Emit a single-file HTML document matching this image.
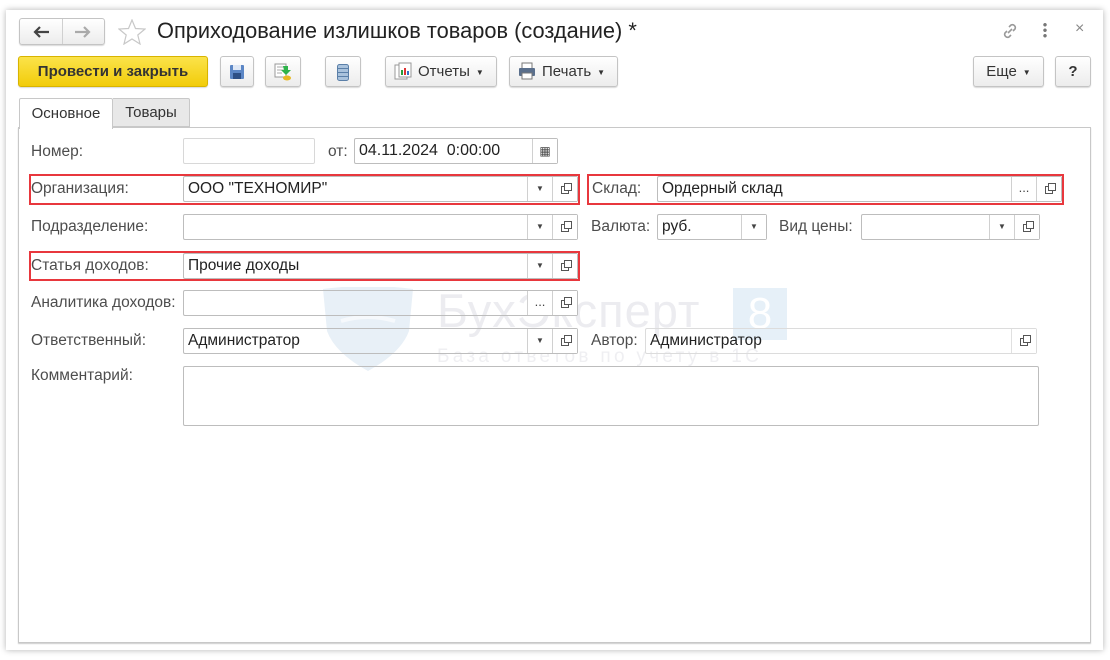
<!DOCTYPE html>
<html><head><meta charset="utf-8"><style>
*{box-sizing:border-box;margin:0;padding:0}
body{width:1110px;height:660px;background:#fff;font-family:"Liberation Sans",Arial,sans-serif;font-size:14px;color:#333;position:relative;overflow:hidden}
.a{position:absolute}
.win{left:6px;top:10px;width:1097px;height:640px;background:#fff;box-shadow:0 0 6px rgba(0,0,0,.3)}
.btn{position:absolute;border:1px solid #c4c4c4;border-radius:3px;background:linear-gradient(#fff,#ececec);box-shadow:0 1px 1px rgba(0,0,0,.15);height:31px;font-size:14px;line-height:29px;color:#333;text-align:center}
.lbl{position:absolute;font-size:15.5px;color:#4d4d4d}
.f{position:absolute;border:1px solid #bdbdbd;border-radius:2px;background:#fff;height:26px;font-size:15.5px;line-height:24px;padding-left:4px;color:#222;white-space:nowrap}
.dd{position:absolute;top:0;bottom:0;width:25px;border-left:1px solid #d0d0d0;font-size:8px;text-align:center;line-height:24px;color:#444;background:#fff}
.op{position:absolute;top:0;bottom:0;right:0;width:25px;border-left:1px solid #d0d0d0;background:#fff}
.op:before{content:"";position:absolute;left:8px;top:9px;width:6px;height:6px;border:1px solid #555}
.op:after{content:"";position:absolute;left:11px;top:6px;width:6px;height:6px;border:1px solid #555;background:#fff}
.red{position:absolute;border:2px solid #e8373d}
.ar{font-size:8px;margin-left:6px;vertical-align:1px}
</style></head><body>
<div class="a win"></div>
<div class="btn" style="left:19px;top:18px;width:86px;height:27px">
<svg class="a" style="left:12px;top:6px" width="18" height="14" viewBox="0 0 18 14"><path d="M17 7H3M8 2L3 7l5 5" fill="none" stroke="#444" stroke-width="2.2"/></svg>
<span style="position:absolute;left:42px;top:0;bottom:0;border-left:1px solid #d0d0d0"></span>
<svg class="a" style="left:54px;top:6px" width="18" height="14" viewBox="0 0 18 14"><path d="M1 7h14M10 2l5 5-5 5" fill="none" stroke="#aaa" stroke-width="2.2"/></svg></div>
<svg class="a" style="left:118px;top:19px" width="28" height="26" viewBox="0 0 28 26"><polygon points="14,1 17.5,9.5 27,10 19.8,16 22,25 14,20 6,25 8.2,16 1,10 10.5,9.5" fill="none" stroke="#c8c8c8" stroke-width="1.2"/></svg>
<div class="a" style="left:157px;top:18px;font-size:21.8px;color:#222">Оприходование излишков товаров (создание) *</div>
<svg class="a" style="left:1000px;top:21px" width="20" height="20" viewBox="0 0 20 20"><g fill="none" stroke="#999" stroke-width="1.6"><path d="M9 6l2-2a3 3 0 014 4l-2 2"/><path d="M11 14l-2 2a3 3 0 01-4-4l2-2"/><path d="M8 12l4-4"/></g></svg>
<div class="a" style="left:1043px;top:22px;width:4px;height:16px;background:radial-gradient(circle,#777 1.5px,transparent 2px) 0 0/4px 5.5px"></div>
<div class="a" style="left:1075px;top:20px;font-size:16px;color:#888">×</div>
<div class="btn" style="left:18px;top:56px;width:190px;background:linear-gradient(#fbe34a,#f2cc0a);border-color:#d8b400;font-weight:bold;color:#333;font-size:15px">Провести и закрыть</div>
<div class="btn" style="left:220px;top:56px;width:34px"><svg style="margin-top:7px" width="16" height="16" viewBox="0 0 16 16"><rect x="1" y="1" width="14" height="14" rx="1" fill="#5b86c5"/><rect x="4" y="1" width="8" height="5" fill="#dfe8f5"/><rect x="4" y="9" width="8" height="6" fill="#2d4f85"/></svg></div>
<div class="btn" style="left:265px;top:56px;width:36px"><svg style="margin-top:6px" width="18" height="18" viewBox="0 0 18 18"><rect x="1" y="1" width="11" height="13" fill="#fff" stroke="#999"/><path d="M3 4h7M3 7h7M3 10h5" stroke="#aaa"/><path d="M9 3h5v4h3l-5 5-5-5h3z" fill="#2fb34a"/><ellipse cx="13" cy="15" rx="4" ry="2.5" fill="#e8b923"/></svg></div>
<div class="btn" style="left:325px;top:56px;width:36px"><svg style="margin-top:7px" width="12" height="17" viewBox="0 0 12 17"><rect x="0.5" y="0.5" width="11" height="16" rx="2" fill="#a9c2dc" stroke="#5a7fa8"/><path d="M1 4.5h10M1 8.5h10M1 12.5h10" stroke="#5a7fa8"/></svg></div>
<div class="btn" style="left:385px;top:56px;width:112px;text-align:left;padding-left:8px;font-size:15px"><svg style="vertical-align:-4px;margin-right:6px" width="18" height="18" viewBox="0 0 18 18"><rect x="1" y="3" width="12" height="14" fill="#fff" stroke="#999"/><rect x="5" y="1" width="12" height="14" fill="#fff" stroke="#999"/><rect x="7" y="8" width="2" height="5" fill="#2a9d3a"/><rect x="10" y="6" width="2" height="7" fill="#d33"/><rect x="13" y="9" width="2" height="4" fill="#3573c8"/></svg>Отчеты<span class="ar">▼</span></div>
<div class="btn" style="left:509px;top:56px;width:109px;text-align:left;padding-left:8px;font-size:15px"><svg style="vertical-align:-4px;margin-right:6px" width="18" height="18" viewBox="0 0 18 18"><rect x="4" y="1" width="10" height="6" fill="#fff" stroke="#777"/><rect x="1" y="6" width="16" height="8" rx="1" fill="#5a6f8c"/><rect x="4" y="11" width="10" height="6" fill="#fff" stroke="#777"/></svg>Печать<span class="ar">▼</span></div>
<div class="btn" style="left:973px;top:56px;width:71px;font-size:15px">Еще<span class="ar">▼</span></div>
<div class="btn" style="left:1055px;top:56px;width:36px;font-weight:bold;font-size:15px">?</div>
<div class="a" style="left:18px;top:127px;width:1073px;height:516px;border:1px solid #c8c8c8;box-shadow:0 1px 1px #ccc"></div>
<div class="a" style="left:19px;top:98px;width:94px;height:31px;background:#fff;border:1px solid #c8c8c8;border-bottom:none;border-radius:2px 2px 0 0;line-height:29px;text-align:center;font-size:15px">Основное</div>
<div class="a" style="left:113px;top:98px;width:77px;height:29px;background:#e8e8e8;border:1px solid #c8c8c8;border-left:none;border-radius:0 2px 0 0;line-height:28px;text-align:center;font-size:15px">Товары</div>
<svg class="a" style="left:321px;top:287px" width="94" height="84" viewBox="0 0 94 84"><path d="M2 2 Q47 -4 92 2 L88 44 Q80 66 47 84 Q14 66 6 44 Z" fill="#e8f0f7"/><path d="M20 34 Q47 26 74 34" stroke="#f6f9fc" stroke-width="4" fill="none"/></svg>
<div class="a" style="left:437px;top:283px;font-size:47px;color:#ececf0;letter-spacing:1px">БухЭксперт</div>
<div class="a" style="left:733px;top:288px;width:54px;height:52px;background:#e6f0f8;color:#fff;font-size:44px;text-align:center;line-height:52px">8</div>
<div class="a" style="left:437px;top:346px;font-size:19px;color:#efeff2;letter-spacing:3.3px">База ответов по учету в 1С</div>
<div class="lbl" style="left:31px;top:143px">Номер:</div>
<div class="f" style="left:183px;top:138px;width:132px;border-color:#d8d8d8"></div>
<div class="lbl" style="left:328px;top:143px">от:</div>
<div class="f" style="left:354px;top:138px;width:204px;font-size:16px">04.11.2024&nbsp; 0:00:00<div class="dd" style="right:0;font-size:12px">▦</div></div>
<div class="lbl" style="left:31px;top:180px">Организация:</div>
<div class="f" style="left:183px;top:176px;width:395px">ООО "ТЕХНОМИР"<div class="dd" style="right:25px">▼</div><div class="op"></div></div>
<div class="red" style="left:29px;top:174px;width:551px;height:31px"></div>
<div class="lbl" style="left:592px;top:180px">Склад:</div>
<div class="f" style="left:657px;top:176px;width:405px">Ордерный склад<div class="dd" style="right:25px;font-size:13px;line-height:22px">...</div><div class="op"></div></div>
<div class="red" style="left:587px;top:174px;width:477px;height:31px"></div>
<div class="lbl" style="left:31px;top:218px">Подразделение:</div>
<div class="f" style="left:183px;top:214px;width:395px"><div class="dd" style="right:25px">▼</div><div class="op"></div></div>
<div class="lbl" style="left:591px;top:218px">Валюта:</div>
<div class="f" style="left:657px;top:214px;width:110px">руб.<div class="dd" style="right:0">▼</div></div>
<div class="lbl" style="left:779px;top:218px">Вид цены:</div>
<div class="f" style="left:861px;top:214px;width:179px"><div class="dd" style="right:25px">▼</div><div class="op"></div></div>
<div class="lbl" style="left:31px;top:257px">Статья доходов:</div>
<div class="f" style="left:183px;top:253px;width:395px">Прочие доходы<div class="dd" style="right:25px">▼</div><div class="op"></div></div>
<div class="red" style="left:29px;top:251px;width:551px;height:30px"></div>
<div class="lbl" style="left:31px;top:294px">Аналитика доходов:</div>
<div class="f" style="left:183px;top:290px;width:395px;background:transparent"><div class="dd" style="right:25px;font-size:13px;line-height:22px">...</div><div class="op"></div></div>
<div class="lbl" style="left:31px;top:332px">Ответственный:</div>
<div class="f" style="left:183px;top:328px;width:395px;background:transparent">Администратор<div class="dd" style="right:25px">▼</div><div class="op"></div></div>
<div class="lbl" style="left:591px;top:332px">Автор:</div>
<div class="f" style="left:645px;top:328px;width:392px;border-color:#dcdcdc;background:transparent">Администратор<div class="op" style="border-left:1px solid #e0e0e0"></div></div>
<div class="lbl" style="left:31px;top:367px">Комментарий:</div>
<div class="f" style="left:183px;top:366px;width:856px;height:60px;background:transparent"></div>
</body></html>
